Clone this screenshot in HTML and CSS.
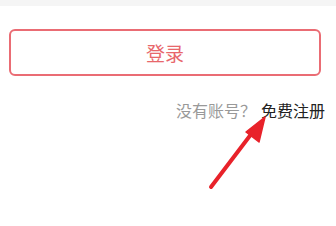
FILE: index.html
```html
<!DOCTYPE html>
<html lang="zh-CN">
<head>
    <meta charset="UTF-8">
    <meta name="viewport" content="width=device-width, initial-scale=1.0">
    <title>登录</title>
    <link rel="stylesheet" href="styles.css">
</head>
<body>
    <div class="top-strip"></div>

    <div class="login-box">
        <button class="login-btn">登录</button>
    </div>

    <div class="register-row">
        <span class="no-account">没有账号？</span><a class="register-link" href="#">免费注册</a>
    </div>

    <!-- annotation arrow -->
    <svg class="arrow" width="336" height="226" viewBox="0 0 336 226">
        <line x1="211" y1="187" x2="252" y2="133" stroke="#e8222a" stroke-width="4" stroke-linecap="round"/>
        <polygon points="265,117 246,132 259,142" fill="#e8222a" stroke="#e8222a" stroke-width="1.5" stroke-linejoin="round"/>
    </svg>
</body>
</html>
```

FILE: styles.css
```css
* { margin: 0; padding: 0; box-sizing: border-box; }

body {
    font-family: "Noto Sans CJK SC", "Noto Sans", sans-serif;
    background: #fff;
    width: 336px;
    height: 226px;
    position: relative;
    overflow: hidden;
}

.top-strip {
    height: 6px;
    background: #f5f5f5;
}

.login-box {
    padding: 0 15px 0 9px;
}

.login-btn {
    display: block;
    width: 100%;
    height: 47px;
    margin-top: 23px;
    background: #fff;
    border: 2px solid #ea6c74;
    border-radius: 6px;
    color: #e8676b;
    font-family: inherit;
    font-size: 19px;
    line-height: 43px;
}

.register-row {
    margin-top: 25px;
    text-align: right;
    padding-right: 11px;
    font-size: 16px;
    line-height: 18px;
}

.no-account {
    color: #999;
    margin-right: 5px;
}

.register-link {
    color: #222;
    text-decoration: none;
}

.arrow {
    position: absolute;
    left: 0;
    top: 0;
}
```
